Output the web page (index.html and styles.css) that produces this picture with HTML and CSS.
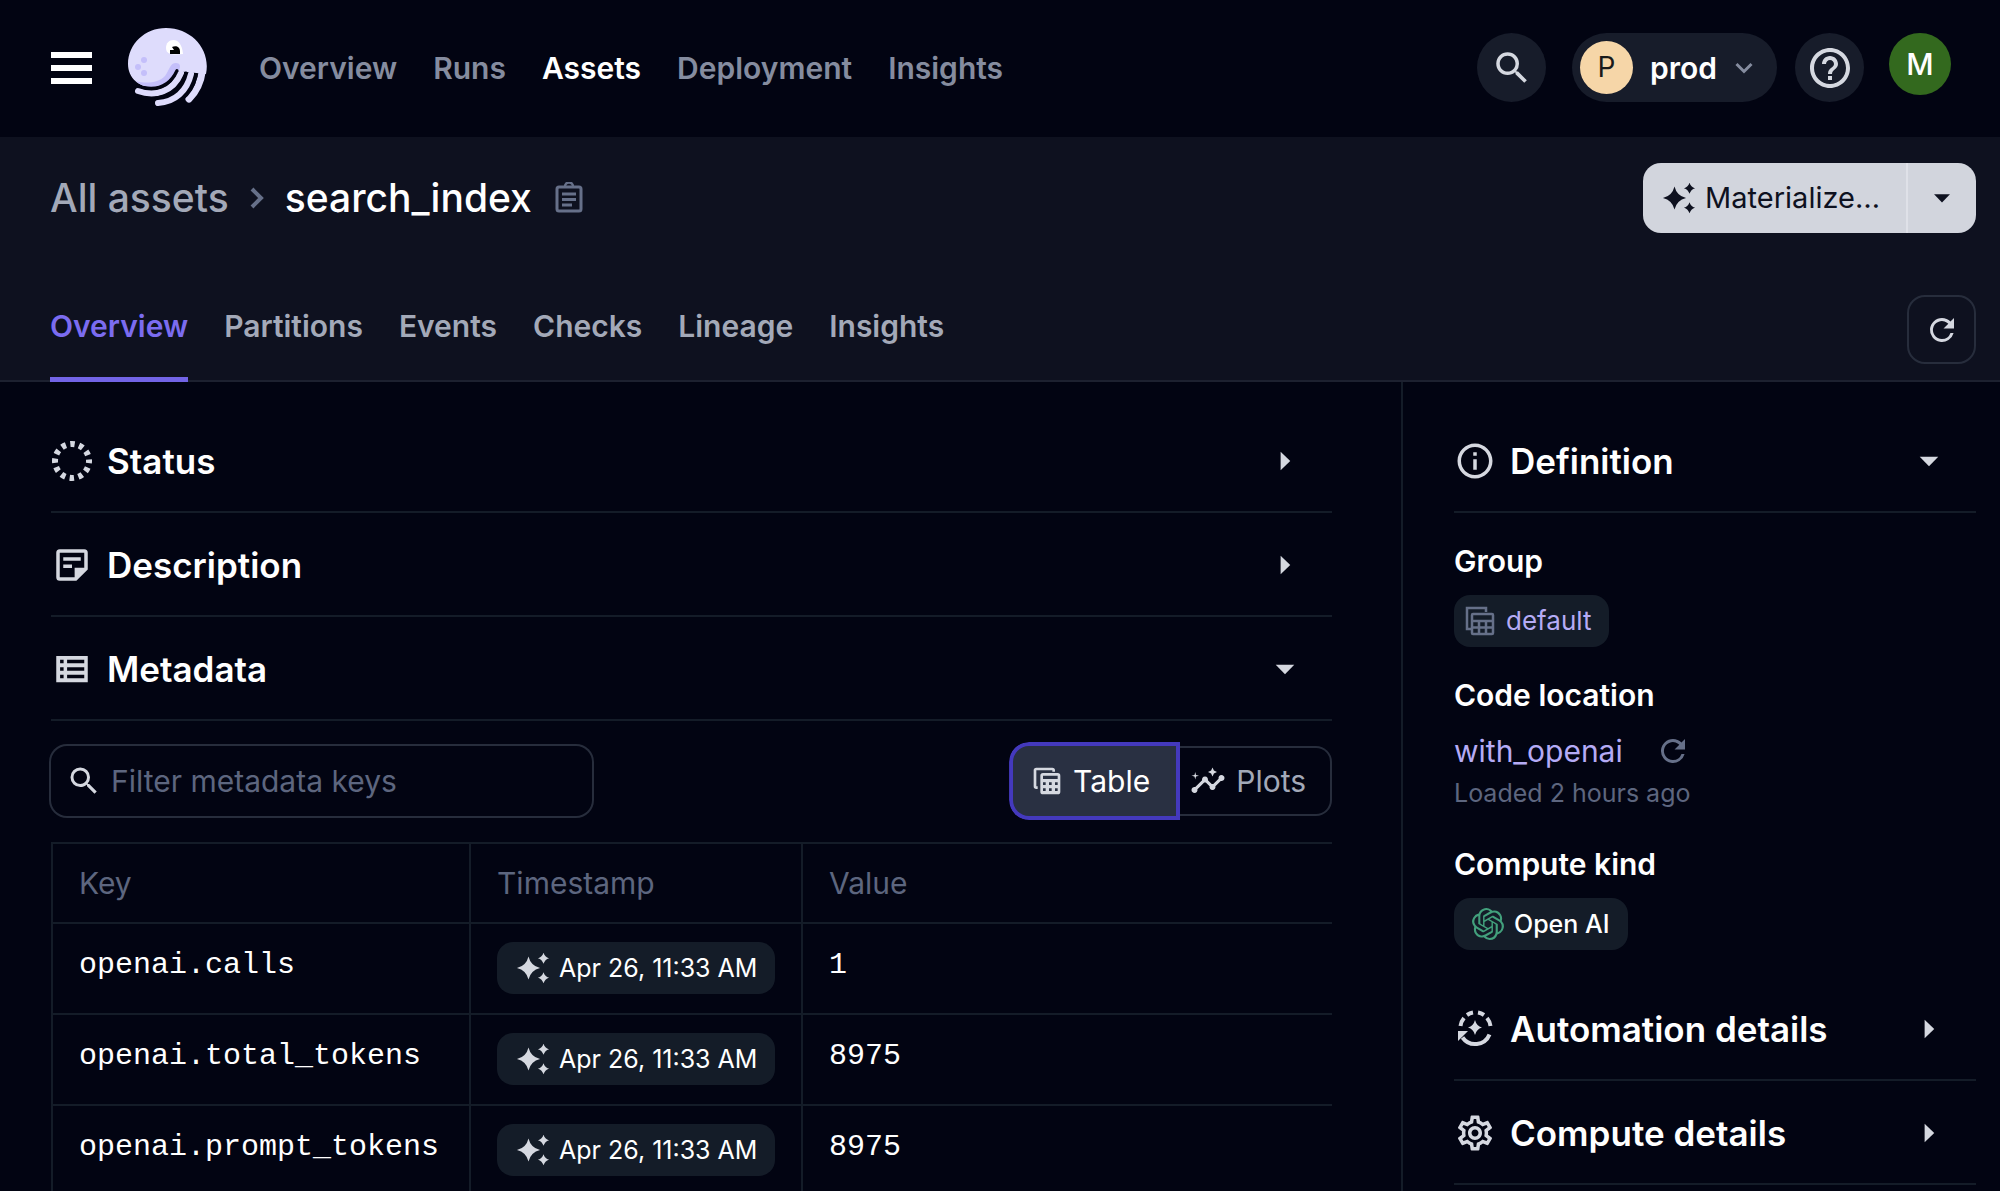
FILE: index.html
```
<!DOCTYPE html>
<html lang="en">
<head>
    <meta charset="UTF-8">
    <meta name="viewport" content="width=device-width, initial-scale=1.0">
    <title>search_index | Assets</title>
    <link rel="stylesheet" href="styles.css">
</head>
<body>

    <!-- Shared icons -->
    <svg class="sprite" aria-hidden="true">
        <symbol id="icon-search" viewBox="0 0 24 24"><path d="M15.5 14h-.79l-.28-.27A6.47 6.47 0 0 0 16 9.5 6.5 6.5 0 1 0 9.5 16c1.61 0 3.09-.59 4.23-1.57l.27.28v.79l5 4.99L20.49 19l-4.99-5zm-6 0C7.01 14 5 11.99 5 9.5S7.01 5 9.5 5 14 7.01 14 9.5 11.99 14 9.5 14z"/></symbol>
        <symbol id="icon-sparkle" viewBox="0 0 24 24"><path d="M9 4.3Q10.5 10.5 16.7 12 10.5 13.5 9 19.7 7.5 13.5 1.3 12 7.5 10.5 9 4.3zM19 1.8Q19.9 4.6 22.7 5.5 19.9 6.4 19 9.2 18.1 6.4 15.3 5.5 18.1 4.6 19 1.8zM19 14.8Q19.9 17.6 22.7 18.5 19.9 19.4 19 22.2 18.1 19.4 15.3 18.5 18.1 17.6 19 14.8z"/></symbol>
        <symbol id="icon-refresh" viewBox="0 0 24 24"><path d="M17.65 6.35A7.958 7.958 0 0 0 12 4a8 8 0 1 0 7.73 10h-2.08A5.99 5.99 0 0 1 12 18a6 6 0 1 1 4.22-10.22L13 11h7V4z"/></symbol>
        <symbol id="icon-down" viewBox="0 0 24 24"><path d="M6.7 9.5l5.3 5.5 5.3-5.5z"/></symbol>
        <symbol id="icon-right" viewBox="0 0 24 24"><path d="M9.5 6.7l5.5 5.3-5.5 5.3z"/></symbol>
    </svg>

    <header class="topbar">
        <button class="menu-btn" aria-label="Menu"><span></span><span></span><span></span></button>
        <a class="logo" href="#" aria-label="Home">
            <svg viewBox="8 8 80 80">
                <path fill="#dedcfc" d="M46 8C25 8 8 24 8 44c0 14 11 23 24 23 12 0 20-8 25-16l29 3C91 30 72 8 46 8z"/>
                <path fill="#c4bffa" d="M16 61c9 3 23 2 29-5 5-7 5-13 11-13 4 0 5 3 3 7-5 10-13 17-27 17-6 0-12-2-16-6z"/>
                <g fill="none" stroke="#dedcfc" stroke-width="6" stroke-linecap="round">
                    <path d="M18 71c17 6 35 1 43-18"/>
                    <path d="M38 83c17-1 29-12 33-29"/>
                    <path stroke-width="7" d="M69 79c7-7 12-17 13.5-29"/>
                </g>
                <g fill="none" stroke="#020412" stroke-width="3" stroke-linecap="round">
                    <path d="M23 67.5c15 3 27-2 34-17"/>
                    <path d="M36 78c16-2 26-11 30-25"/>
                    <path d="M62 79c7-5 12-13 14-23"/>
                </g>
                <circle cx="24" cy="40" r="3" fill="#c4bffa"/>
                <circle cx="18" cy="47" r="3" fill="#c4bffa"/>
                <circle cx="24" cy="53" r="3" fill="#c4bffa"/>
                <path fill="#fff" d="M46 28c0-5 3-8 7.5-8S62 24 63 34c-9 1-17 1-17-6z"/>
                <path fill="#000" d="M50 34v-4h4l-2-3c4-2 8 0 8 4v3z"/>
            </svg>
        </a>
        <nav class="main-nav">
            <a href="#">Overview</a>
            <a href="#">Runs</a>
            <a href="#" class="active">Assets</a>
            <a href="#">Deployment</a>
            <a href="#">Insights</a>
        </nav>
        <div class="top-actions">
            <button class="round-btn search-btn" aria-label="Search"><svg class="icon-lg"><use href="#icon-search"/></svg></button>
            <button class="deploy-btn">
                <span class="deploy-badge">P</span>
                prod
                <svg class="chevron" viewBox="0 0 20 20"><path d="M2.5 6l7.5 7.5L17.500 6"/></svg>
            </button>
            <button class="round-btn" aria-label="Help">
                <svg class="icon-xl" viewBox="0 0 24 24"><path d="M11 18h2v-2h-2v2zm1-16C6.48 2 2 6.48 2 12s4.48 10 10 10 10-4.48 10-10S17.52 2 12 2zm0 18c-4.41 0-8-3.59-8-8s3.59-8 8-8 8 3.59 8 8-3.59 8-8 8zm0-14c-2.21 0-4 1.79-4 4h2c0-1.1.9-2 2-2s2 .9 2 2c0 2-3 1.75-3 5h2c0-2.25 3-2.5 3-5 0-2.21-1.79-4-4-4z"/></svg>
            </button>
            <button class="avatar">M</button>
        </div>
    </header>

    <!-- Asset title and tabs -->
    <section class="page-head">
        <div class="title-row">
            <h1 class="breadcrumb">
                <a href="#">All assets</a>
                <svg class="crumb-sep" viewBox="0 0 20 28"><path d="M5 5l9 9-9 9"/></svg>
                <span>search_index</span>
            </h1>
            <button class="copy-btn" aria-label="Copy asset name">
                <svg viewBox="0 0 28 32" fill="none" stroke="#667089" stroke-width="3"><rect x="2" y="5" width="24" height="24" rx="2"/><path d="M7 12h14M7 17.5h14M7 23h10"/><path d="M10 4.5a4 4 0 0 1 8 0" stroke-width="2.5"/></svg>
            </button>
            <div class="materialize">
                <button class="materialize-main"><svg class="icon"><use href="#icon-sparkle"/></svg>Materialize…</button>
                <button class="materialize-more" aria-label="More options"><svg class="icon"><use href="#icon-down"/></svg></button>
            </div>
        </div>
        <div class="tab-row">
            <nav class="tabs">
                <a href="#" class="active">Overview</a>
                <a href="#">Partitions</a>
                <a href="#">Events</a>
                <a href="#">Checks</a>
                <a href="#">Lineage</a>
                <a href="#">Insights</a>
            </nav>
            <button class="refresh-btn" aria-label="Refresh"><svg class="icon"><use href="#icon-refresh"/></svg></button>
        </div>
    </section>

    <div class="content">
        <main class="main-col">
            <button class="section-head">
                <svg class="icon-lg" viewBox="0 0 42 42"><circle cx="21" cy="21" r="17" fill="none" stroke="#d5d8e0" stroke-width="6" stroke-dasharray="4.5 4.4" stroke-dashoffset="2.25"/></svg>
                <span>Status</span>
                <svg class="icon-lg"><use href="#icon-right"/></svg>
            </button>
            <button class="section-head">
                <svg class="icon-lg" viewBox="0 0 24 24"><path fill-rule="evenodd" d="M5 3h14a2 2 0 0 1 2 2v9.5L14.5 21H5a2 2 0 0 1-2-2V5a2 2 0 0 1 2-2zm0 2v14h8.5v-5.5H19V5zm2 2.5h10v2H7zm0 4.2h5v2H7z"/></svg>
                <span>Description</span>
                <svg class="icon-lg"><use href="#icon-right"/></svg>
            </button>
            <button class="section-head">
                <svg class="icon-lg" viewBox="0 0 24 24"><path fill-rule="evenodd" d="M3 4.500h18v15H3zm2.200 2.200v2h2v-2zm4 0v2H19v-2zm-4 4.300v2h2v-2zm4 0v2H19v-2zm-4 4.300v2h2v-2zm4 0v2H19v-2z"/></svg>
                <span>Metadata</span>
                <svg class="icon-lg"><use href="#icon-down"/></svg>
            </button>

            <div class="toolbar">
                <label class="filter">
                    <svg class="icon"><use href="#icon-search"/></svg>
                    <input type="text" placeholder="Filter metadata keys" aria-label="Filter metadata keys">
                </label>
                <div class="view-toggle">
                    <button class="toggle-btn selected">
                        <svg class="icon-sm" viewBox="0 0 24 24"><path d="M4 2h12a2 2 0 0 1 2 2v1h-2V4H4v12h1v2H4a2 2 0 0 1-2-2V4a2 2 0 0 1 2-2z"/><path fill-rule="evenodd" d="M9 6h11a2 2 0 0 1 2 2v12a2 2 0 0 1-2 2H9a2 2 0 0 1-2-2V8a2 2 0 0 1 2-2zm0 2v2.500h11V8zm0 5v2h2v-2zm4.500 0v2h2v-2zm4.500 0v2h2v-2zm-9 4.500v2h2v-2zm4.500 0v2h2v-2zm4.500 0v2h2v-2z"/></svg>
                        Table
                    </button>
                    <button class="toggle-btn">
                        <svg class="icon" viewBox="0 0 24 24"><path d="M21 8c-1.45 0-2.26 1.44-1.93 2.51l-3.55 3.56c-.3-.09-.74-.09-1.04 0l-2.55-2.55C12.27 10.45 11.46 9 10 9c-1.45 0-2.27 1.44-1.93 2.52l-4.56 4.55C2.44 15.74 1 16.55 1 18c0 1.1.9 2 2 2 1.45 0 2.26-1.44 1.93-2.51l4.55-4.56c.3.09.74.09 1.04 0l2.55 2.55C12.73 16.55 13.54 18 15 18c1.45 0 2.27-1.44 1.93-2.52l3.56-3.55C21.56 12.26 23 11.45 23 10c0-1.1-.9-2-2-2zM15 9l.94-2.07L18 6l-2.06-.93L15 3l-.92 2.07L12 6l2.08.93zM3.5 11L4 9l2-.5L4 8l-.5-2L3 8l-2 .5L3 9z"/></svg>
                        Plots
                    </button>
                </div>
            </div>

            <table class="metadata">
                <thead>
                    <tr><th class="col-key">Key</th><th class="col-time">Timestamp</th><th>Value</th></tr>
                </thead>
                <tbody>
                    <tr>
                        <td>openai.calls</td>
                        <td class="time"><a class="tag" href="#"><svg class="icon"><use href="#icon-sparkle"/></svg>Apr 26, 11:33 AM</a></td>
                        <td>1</td>
                    </tr>
                    <tr>
                        <td>openai.total_tokens</td>
                        <td class="time"><a class="tag" href="#"><svg class="icon"><use href="#icon-sparkle"/></svg>Apr 26, 11:33 AM</a></td>
                        <td>8975</td>
                    </tr>
                    <tr>
                        <td>openai.prompt_tokens</td>
                        <td class="time"><a class="tag" href="#"><svg class="icon"><use href="#icon-sparkle"/></svg>Apr 26, 11:33 AM</a></td>
                        <td>8975</td>
                    </tr>
                </tbody>
            </table>
        </main>

        <aside class="side-col">
            <button class="section-head">
                <svg class="icon-lg" viewBox="0 0 24 24"><path d="M11 7h2v2h-2zm0 4h2v6h-2zm1-9C6.48 2 2 6.48 2 12s4.48 10 10 10 10-4.48 10-10S17.52 2 12 2zm0 18c-4.41 0-8-3.59-8-8s3.59-8 8-8 8 3.59 8 8-3.59 8-8 8z"/></svg>
                <span>Definition</span>
                <svg class="icon-lg"><use href="#icon-down"/></svg>
            </button>
            <div class="definition">
                <div class="field">
                    <h3>Group</h3>
                    <a class="tag tag-group" href="#">
                        <svg class="icon" viewBox="0 0 36 36" fill="none" stroke="#667089" stroke-width="2.5"><path d="M9 26H5V5h19v4"/><rect x="10" y="11" width="21" height="20" rx="1"/><path d="M10 18h21M10 24.5h21M17 18v13M24 18v13"/></svg>
                        default
                    </a>
                </div>
                <div class="field">
                    <h3>Code location</h3>
                    <div class="location">
                        <a href="#">with_openai</a>
                        <button class="reload-btn" aria-label="Reload code location"><svg class="icon"><use href="#icon-refresh"/></svg></button>
                    </div>
                    <p class="loaded">Loaded 2 hours ago</p>
                </div>
                <div class="field">
                    <h3>Compute kind</h3>
                    <span class="tag tag-kind">
                        <svg class="icon-sm" viewBox="0 0 24 24"><path d="M22.2819 9.8211a5.9847 5.9847 0 0 0-.5157-4.9108 6.0462 6.0462 0 0 0-6.5098-2.9A6.0651 6.0651 0 0 0 4.9807 4.1818a5.9847 5.9847 0 0 0-3.9977 2.9 6.0462 6.0462 0 0 0 .7427 7.0966 5.98 5.98 0 0 0 .511 4.9107 6.051 6.051 0 0 0 6.5146 2.9001A5.9847 5.9847 0 0 0 13.2599 24a6.0557 6.0557 0 0 0 5.7718-4.2058 5.9894 5.9894 0 0 0 3.9977-2.9001 6.0557 6.0557 0 0 0-.7475-7.0729zm-9.022 12.6081a4.4755 4.4755 0 0 1-2.8764-1.0408l.1419-.0804 4.7783-2.7582a.7948.7948 0 0 0 .3927-.6813v-6.7369l2.02 1.1686a.071.071 0 0 1 .038.052v5.5826a4.504 4.504 0 0 1-4.4945 4.4944zm-9.6607-4.1254a4.4708 4.4708 0 0 1-.5346-3.0137l.142.0852 4.783 2.7582a.7712.7712 0 0 0 .7806 0l5.8428-3.3685v2.3324a.0804.0804 0 0 1-.0332.0615L9.74 19.9502a4.4992 4.4992 0 0 1-6.1408-1.6464zM2.3408 7.8956a4.485 4.485 0 0 1 2.3655-1.9728V11.6a.7664.7664 0 0 0 .3879.6765l5.8144 3.3543-2.0201 1.1685a.0757.0757 0 0 1-.071 0l-4.8303-2.7865A4.504 4.504 0 0 1 2.3408 7.872zm16.5963 3.8558L13.1038 8.364 15.1192 7.2a.0757.0757 0 0 1 .071 0l4.8303 2.7913a4.4944 4.4944 0 0 1-.6765 8.1042v-5.6772a.79.79 0 0 0-.407-.667zm2.0107-3.0231l-.142-.0852-4.7735-2.7818a.7759.7759 0 0 0-.7854 0L9.409 9.2297V6.8974a.0662.0662 0 0 1 .0284-.0615l4.8303-2.7866a4.4992 4.4992 0 0 1 6.6802 4.66zM8.3065 12.863l-2.02-1.1638a.0804.0804 0 0 1-.038-.0567V6.0742a4.4992 4.4992 0 0 1 7.3757-3.4537l-.142.0805L8.704 5.459a.7948.7948 0 0 0-.3927.6813zm1.0976-2.3654l2.602-1.4998 2.6069 1.4998v2.9994l-2.5974 1.4997-2.6067-1.4997Z"/></svg>
                        Open AI
                    </span>
                </div>
            </div>
            <button class="section-head">
                <svg class="icon-lg" viewBox="4 4 42 42"><g fill="none" stroke="#d5d8e0" stroke-width="4"><path d="M10.5 22a15.5 15.5 0 0 1 3.5-8M17 11a15.5 15.5 0 0 1 6-2.5M28 8.500a15.500 15.500 0 0 1 6 2.500M37 14a15.500 15.500 0 0 1 3.500 8M39.500 30.500a15.500 15.500 0 0 1-27 3"/></g><path d="M8 27h10l-3.500 3.500-2.500 2.500-4 4zM25 16q1.500 6 7 7.500-5.500 1.500-7 7.500-1.500-6-7-7.500 5.500-1.500 7-7.500z"/></svg>
                <span>Automation details</span>
                <svg class="icon-lg"><use href="#icon-right"/></svg>
            </button>
            <button class="section-head">
                <svg class="icon-lg" viewBox="0 0 24 24"><path d="M19.43 12.98c.04-.32.07-.64.07-.98s-.03-.66-.07-.98l2.11-1.65c.19-.15.24-.42.12-.64l-2-3.46c-.09-.16-.26-.25-.44-.25-.06 0-.12.01-.17.03l-2.49 1c-.52-.4-1.08-.73-1.69-.98l-.38-2.65C14.46 2.18 14.25 2 14 2h-4c-.25 0-.46.18-.49.42l-.38 2.65c-.61.25-1.17.59-1.69.98l-2.49-1c-.06-.02-.12-.03-.18-.03-.17 0-.34.09-.43.25l-2 3.46c-.13.22-.07.49.12.64l2.11 1.65c-.04.32-.07.65-.07.98s.03.66.07.98l-2.11 1.65c-.19.15-.24.42-.12.64l2 3.46c.09.16.26.25.44.25.06 0 .12-.01.17-.03l2.49-1c.52.4 1.08.73 1.69.98l.38 2.65c.03.24.24.42.49.42h4c.25 0 .46-.18.49-.42l.38-2.65c.61-.25 1.17-.59 1.69-.98l2.49 1c.06.02.12.03.18.03.17 0 .34-.09.43-.25l2-3.46c.12-.22.07-.49-.12-.64l-2.11-1.65zm-1.98-1.71c.04.31.05.52.05.73 0 .21-.02.43-.05.73l-.14 1.13.89.7 1.08.84-.7 1.21-1.27-.51-1.04-.42-.9.68c-.43.32-.84.56-1.25.73l-1.06.43-.16 1.13-.2 1.35h-1.4l-.19-1.35-.16-1.13-1.06-.43c-.43-.18-.83-.41-1.23-.71l-.91-.7-1.06.43-1.27.51-.7-1.21 1.08-.84.89-.7-.14-1.13c-.03-.31-.05-.54-.05-.74s.02-.43.05-.73l.14-1.13-.89-.7-1.08-.84.7-1.21 1.27.51 1.04.42.9-.68c.43-.32.84-.56 1.25-.73l1.06-.43.16-1.13.2-1.35h1.39l.19 1.35.16 1.13 1.06.43c.43.18.83.41 1.23.71l.91.7 1.06-.43 1.27-.51.7 1.21-1.07.85-.89.7.14 1.13zM12 8c-2.21 0-4 1.79-4 4s1.79 4 4 4 4-1.79 4-4-1.79-4-4-4zm0 6c-1.1 0-2-.9-2-2s.9-2 2-2 2 .9 2 2-.9 2-2 2z"/></svg>
                <span>Compute details</span>
                <svg class="icon-lg"><use href="#icon-right"/></svg>
            </button>
        </aside>
    </div>

</body>
</html>
```
FILE: styles.css
```
* {
    box-sizing: border-box;
}
body {
    margin: 0;
    background-color: #020412;
    color: #fff;
    font-family: Inter, sans-serif;
    font-size: 30px;
    line-height: 40px;
}
a {
    color: inherit;
    text-decoration: none;
}
button, input {
    font: inherit;
    color: inherit;
    background: none;
    border: none;
    margin: 0;
    padding: 0;
}
button {
    cursor: pointer;
}
svg {
    display: block;
    flex-shrink: 0;
    fill: #d5d8e0;
}
.sprite {
    display: none;
}
.icon-sm {
    width: 32px;
    height: 32px;
}
.icon {
    width: 36px;
    height: 36px;
}
.icon-lg {
    width: 42px;
    height: 42px;
}
.icon-xl {
    width: 48px;
    height: 48px;
}

/* Top bar */
.topbar {
    display: flex;
    align-items: center;
    height: 137px;
    padding: 0 49px 2px 51px;
}
.menu-btn {
    display: flex;
    flex-direction: column;
    gap: 7px;
    width: 41px;
}
.menu-btn span {
    height: 6px;
    background-color: #fff;
}
.logo {
    margin: 0 51px 0 36px;
}
.logo svg {
    width: 80px;
    height: 80px;
}
.main-nav, .tabs {
    display: flex;
    gap: 36px;
    font-weight: 600;
}
.main-nav {
    color: #858c9f;
}
.main-nav .active {
    color: #fff;
}
.top-actions {
    display: flex;
    align-items: flex-start;
    gap: 18px;
    margin-left: auto;
}
.round-btn {
    display: flex;
    align-items: center;
    justify-content: center;
    width: 69px;
    height: 69px;
    border-radius: 50%;
    background-color: #171c2a;
}
.search-btn {
    margin-right: 8px;
}
.deploy-btn {
    display: flex;
    align-items: center;
    gap: 17px;
    height: 69px;
    padding: 0 23px 0 8px;
    border-radius: 35px;
    background-color: #171c2a;
    font-weight: 600;
}
.deploy-badge {
    width: 53px;
    height: 53px;
    border-radius: 50%;
    background-color: #f6d6a8;
    color: #1a1a1a;
    font-size: 28px;
    font-weight: 400;
    line-height: 53px;
}
.chevron {
    width: 20px;
    height: 20px;
    fill: none;
    stroke: #858c9f;
    stroke-width: 3;
}
.avatar {
    width: 62px;
    height: 62px;
    margin-left: 7px;
    border-radius: 50%;
    background-color: #33691e;
    font-weight: 500;
}

/* Page header */
.page-head {
    padding: 26px 24px 0 50px;
    background-color: #0e111f;
    border-bottom: 2px solid #1d2130;
}
.title-row, .tab-row {
    display: flex;
    justify-content: space-between;
}
.title-row {
    align-items: center;
}
.breadcrumb {
    display: flex;
    align-items: center;
    gap: 18px;
    margin: 0;
    font-size: 39px;
    font-weight: 500;
}
.breadcrumb a {
    color: #a3a9b8;
}
.crumb-sep {
    width: 20px;
    height: 28px;
    fill: none;
    stroke: #667089;
    stroke-width: 4;
}
.copy-btn {
    margin-left: 23px;
}
.copy-btn svg {
    width: 28px;
    height: 32px;
    fill: none;
}
.materialize {
    display: flex;
    height: 70px;
    margin-left: auto;
    border-radius: 18px;
    background-color: #d2d5dd;
    color: #0e111f;
}
.materialize svg {
    fill: #0e111f;
}
.materialize-main {
    display: flex;
    align-items: center;
    gap: 8px;
    padding: 0 26px 0 18px;
    font-size: 29px;
}
.materialize-more {
    padding: 0 16px;
    border-left: 2px solid #dfe1e8;
}
.tab-row {
    padding-top: 62px;
}
.tabs {
    color: #a3a9b8;
}
.tabs a {
    padding: 11px 0 31px;
    border-bottom: 5px solid transparent;
    margin-bottom: -2px;
}
.tabs .active {
    color: #7b6cf0;
    border-color: #7264e6;
}
.refresh-btn {
    display: flex;
    align-items: center;
    justify-content: center;
    width: 69px;
    height: 69px;
    border: 2px solid #272d3c;
    border-radius: 18px;
}

/* Content columns */
.content {
    display: grid;
    grid-template-columns: 1fr 599px;
}
.main-col {
    padding: 27px 69px 0 51px;
}
.side-col {
    padding: 27px 24px 0 51px;
    border-left: 2px solid #141c28;
}
.section-head {
    display: flex;
    align-items: center;
    gap: 14px;
    width: 100%;
    height: 104px;
    padding: 2px 26px 0 0;
    border-bottom: 2px solid #141c28;
    font-size: 35px;
    font-weight: 600;
    text-align: left;
}
.section-head span {
    flex: 1;
}

/* Metadata toolbar */
.toolbar {
    display: flex;
    justify-content: space-between;
    padding: 25px 0 26px;
}
.filter {
    display: flex;
    align-items: center;
    gap: 9px;
    width: 541px;
    height: 70px;
    padding: 0 15px;
    border-radius: 16px;
    box-shadow: 0 0 0 2px #272d3c;
}
.filter input {
    flex: 1;
    min-width: 0;
    outline: none;
}
.filter input::placeholder {
    color: #5d667f;
    opacity: 1;
}
.view-toggle {
    display: flex;
    height: 70px;
}
.toggle-btn {
    display: flex;
    align-items: center;
    gap: 10px;
    padding: 0 24px 0 14px;
    border: 2px solid #272d3c;
    border-left: none;
    border-radius: 0 16px 16px 0;
    color: #a3a9b8;
}
.toggle-btn.selected {
    z-index: 1;
    padding: 0 26px 0 18px;
    border: none;
    border-radius: 16px 0 0 16px;
    background-color: #293042;
    /* sharp right edge where the two buttons meet */
    clip-path: inset(-4px -4px -4px -4px round 20px 0 0 20px);
    box-shadow: 0 0 0 4px #4439bd;
    color: #fff;
}

/* Metadata table */
.metadata {
    width: 100%;
    table-layout: fixed;
    border-collapse: separate;
    border-spacing: 0;
    border-top: 2px solid #141c28;
    text-align: left;
}
.metadata th, .metadata td {
    padding: 0 26px;
    border-left: 2px solid #141c28;
    border-bottom: 2px solid #141c28;
}
.metadata th {
    height: 80px;
    color: #5d667f;
    font-weight: 400;
}
.metadata td {
    height: 91px;
    padding-top: 21px;
    vertical-align: top;
    font-family: "Liberation Mono", monospace;
}
.metadata .time {
    padding-top: 18px;
}
.col-key {
    width: 418px;
}
.col-time {
    width: 332px;
}
.tag {
    display: inline-flex;
    align-items: center;
    gap: 8px;
    height: 52px;
    padding: 0 18px;
    border-radius: 16px;
    background-color: #141c28;
    font-family: Inter, sans-serif;
    font-size: 25px;
    white-space: nowrap;
    vertical-align: top;
}

/* Sidebar */
.definition {
    display: flex;
    flex-direction: column;
    gap: 28px;
    padding: 28px 0 27px;
}
.field h3 {
    margin: 0 0 14px;
    font-size: 30px;
    font-weight: 600;
}
.tag-group {
    padding-left: 8px;
    color: #b5abf5;
    font-size: 26px;
}
.tag-group svg {
    fill: none;
}
.tag-kind {
    gap: 10px;
    font-weight: 500;
}
.tag-kind svg {
    fill: #42a07c;
}
.location {
    display: flex;
    align-items: center;
    gap: 32px;
    height: 44px;
    color: #b5abf5;
}
.reload-btn svg {
    fill: #667089;
}
.loaded {
    margin: 2px 0 5px;
    color: #5d667f;
    font-size: 25px;
    line-height: 36px;
}
```
